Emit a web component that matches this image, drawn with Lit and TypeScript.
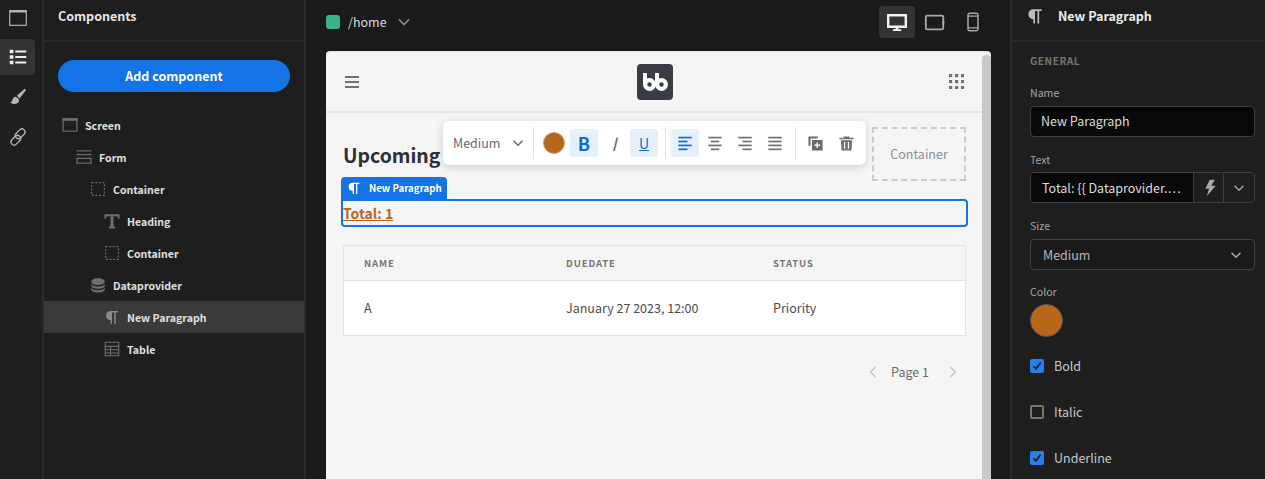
import { LitElement, html, css, svg } from "lit";
import { customElement } from "lit/decorators.js";

const P = "M12 6v15h-2v-5a6 6 0 1 1 0-12h10v2h-3v15h-2V6h-3z";
const DB = "M21 9.5v3c0 2.485-4.03 4.5-9 4.5s-9-2.015-9-4.5v-3c0 2.485 4.03 4.5 9 4.5s9-2.015 9-4.5zm-18 5c0 2.485 4.03 4.5 9 4.5s9-2.015 9-4.5v3c0 2.485-4.03 4.5-9 4.5s-9-2.015-9-4.5v-3zm9-2.5c-4.97 0-9-2.015-9-4.5S7.03 3 12 3s9 2.015 9 4.5-4.03 4.5-9 4.5z";

const icon = (size: number, body: unknown, box = "0 0 24 24") =>
  html`<svg width=${size} height=${size} viewBox=${box} fill="currentColor">${body}</svg>`;

const screenIcon = svg`<rect x="2.8" y="4" width="18.4" height="16.2" fill="none" stroke="currentColor" stroke-width="1.6"/><rect x="2" y="3" width="20" height="3.4"/>`;
const formIcon = svg`<rect x="2" y="3" width="20" height="1.6"/><rect x="2" y="8" width="20" height="1.6"/><rect x="2.8" y="13.8" width="18.4" height="6.4" fill="none" stroke="currentColor" stroke-width="1.6"/>`;
const containerIcon = svg`<rect x="3.5" y="3.5" width="17" height="17" fill="none" stroke="currentColor" stroke-width="1.6" stroke-dasharray="2.6 2.2"/>`;
const headingIcon = svg`<path d="M2 3h20v6h-1.6c-.4-2-1.2-3.2-3.2-3.2h-3.2V18c0 1.4.6 1.8 2.4 1.9V22H7.6v-2.1c1.8-.1 2.4-.5 2.4-1.9V5.8H6.8C4.8 5.8 4 7 3.6 9H2z"/>`;
const tableIcon = svg`<rect x="3" y="3" width="18" height="18" fill="none" stroke="currentColor" stroke-width="1.5"/><path d="M3 8.5h18M3 13h18M3 17.3h18M10 8.5V21" stroke="currentColor" stroke-width="1.4" fill="none"/>`;
const chevron = svg`<path d="M6 9l6 6 6-6" fill="none" stroke="currentColor" stroke-width="2"/>`;

const align = (kind: string) => {
  const rows: Record<string, [number, number][]> = {
    left: [[4, 20], [4, 15], [4, 20], [4, 15]],
    center: [[4, 20], [7, 17], [4, 20], [7, 17]],
    right: [[4, 20], [9, 20], [4, 20], [9, 20]],
    justify: [[4, 20], [4, 20], [4, 20], [4, 20]],
  };
  return svg`${rows[kind].map(([a, b], i) => svg`<rect x=${a} y=${4.5 + i * 4.7} width=${b - a} height="2"/>`)}`;
};

interface Row { n: string; d: number; i: unknown; on?: boolean }
const rows: Row[] = [
  { n: "Screen", d: 0, i: screenIcon },
  { n: "Form", d: 1, i: formIcon },
  { n: "Container", d: 2, i: containerIcon },
  { n: "Heading", d: 3, i: headingIcon },
  { n: "Container", d: 3, i: containerIcon },
  { n: "Dataprovider", d: 2, i: svg`<path d=${DB}/>` },
  { n: "New Paragraph", d: 3, i: svg`<path d=${P}/>`, on: true },
  { n: "Table", d: 3, i: tableIcon },
];

@customElement("app-root")
export class AppRoot extends LitElement {
  static styles = css`
    :host { display: block; width: 1265px; height: 479px; overflow: hidden; }
    * { box-sizing: border-box; }
    .app {
      display: grid; grid-template-columns: 44px 262px 1fr 255px; height: 479px; background: #1a1a1a; color: #e0e0e0;
      font-family: "Noto Sans CJK JP", "Noto Sans", sans-serif; font-size: 12.5px; line-height: 18px;
    }
    svg { display: block; flex: none; }
    .rail { background: #1e1e1e; border-right: 2px solid #2a2a2a; display: flex; flex-direction: column; gap: 4px; color: #b4b4b4; }
    .rail-btn { width: 35px; height: 36px; border-radius: 0 4px 4px 0; display: flex; align-items: center; justify-content: center; }
    .rail-btn.first { height: 35px; }
    .rail-btn.on { background: #333; color: #eee; }
    .left { background: #1e1e1e; border-right: 2px solid #2a2a2a; }
    .phead { height: 42px; border-bottom: 2px solid #2a2a2a; display: flex; align-items: center; font-weight: 600; color: #e6e6e6; padding: 0 0 8px 14px; }
    .add { margin: 18px 14px 17px 14px; height: 32px; border-radius: 16px; background: #1473e6; color: #fff; font-weight: 700; display: flex; align-items: center; justify-content: center; }
    .tree { display: flex; flex-direction: column; }
    .row { height: 32px; display: flex; align-items: center; gap: 6px; font-size: 10.6px; font-weight: 600; color: #e0e0e0; }
    .row span { padding-top: 1px; }
    .row svg { color: #6e6e6e; }
    .row.on { background: #3a3a3a; }
    .row.on svg { color: #8a8a8a; }

    .center { padding: 0 19px 0 20px; display: flex; flex-direction: column; min-width: 0; }
    .top { height: 51px; flex: none; display: flex; align-items: center; padding-bottom: 7px; color: #d8d8d8; }
    .dot { width: 14px; height: 14px; border-radius: 3px; background: #3cb08a; margin-right: 8px; }
    .route { margin-right: 7px; }
    .chev { color: #8f8f8f; }
    .devices { margin-left: auto; display: flex; align-items: center; gap: 2px; }
    .dev { width: 36px; height: 32px; border-radius: 4px; display: flex; align-items: center; justify-content: center; color: #a8a8a8; }
    .dev.on { background: #333; color: #f2f2f2; }

    .frame { flex: 1; background: #f5f5f5; border-radius: 4px 4px 0 0; border-top: 1px solid #e4e4e4; position: relative; display: grid; grid-template-columns: 1fr 9px; min-height: 0; overflow: hidden; color: #393c44; }
    .bar { background: #c9c9c9; border-radius: 4px 4px 0 0; margin-top: 3px; }
    .page { min-width: 0; position: relative; }
    .nav { height: 61px; border-bottom: 2px solid #e6e6e6; display: flex; align-items: center; justify-content: space-between; padding: 0 18px 0 19px; color: #707070; position: relative; }
    .logo { width: 36px; height: 36px; border-radius: 4px; background: #393c44; position: absolute; left: 311px; top: 12px; display: flex; align-items: center; justify-content: center; color: #fff; }
    .body { padding: 14px 16px 0 17px; }
    .head { display: flex; justify-content: space-between; height: 54px; align-items: center; }
    h1 { margin: 0; font-size: 19.4px; line-height: 30px; font-weight: 600; color: #2c2f36; position: relative; top: 1px; }
    .dash { width: 94px; height: 54px; border: 2px dashed #cbcbcb; display: flex; align-items: center; justify-content: center; color: #8e8e8e; }
    .para { margin-top: 18px; height: 28px; display: flex; align-items: center; font-size: 14px; font-weight: 700; text-decoration: underline; color: #b9651a; }
    .table { margin-top: 18px; border: 1px solid #e3e3e3; }
    .tr { display: grid; grid-template-columns: 202px 207px 1fr; padding-left: 20px; align-items: center; }
    .th { height: 35px; border-bottom: 1px solid #e3e3e3; font-size: 9.5px; font-weight: 700; letter-spacing: .9px; color: #757575; }
    .td { height: 54px; background: #fff; color: #4b4b4b; }
    .pager { display: flex; justify-content: flex-end; align-items: center; height: 18px; margin-top: 27px; color: #6e6e6e; padding-right: 3px; }
    .pager svg { color: #c0c0c0; }
    .pager span { margin: 0 14px 0 8px; }

    .select { position: absolute; left: 15px; top: 147px; width: 627px; height: 28px; border: 2px solid #1473e6; border-radius: 0 4px 4px 4px; pointer-events: none; }
    .tag { position: absolute; left: -2px; top: -24px; height: 22px; width: 106px; border-radius: 4px 4px 0 0; background: #1473e6; color: #fff; display: flex; align-items: center; gap: 7px; padding-left: 5px; font-size: 9.7px; font-weight: 600; white-space: nowrap; }
    .toolbar { position: absolute; left: 117px; top: 69px; width: 423px; height: 44px; background: #fff; border-radius: 6px; box-shadow: 0 2px 8px rgba(0,0,0,.16); display: flex; align-items: center; padding-left: 10px; color: #707070; }
    .tsel { display: flex; align-items: center; color: #6a6a6a; width: 80px; flex: none; justify-content: space-between; padding-right: 6px; }
    .sep { width: 1px; height: 32px; background: #e2e2e2; flex: none; }
    .swatch { width: 22px; height: 22px; border-radius: 50%; background: #b9651a; border: 1px solid #c9a283; margin: 0 5px 0 9px; flex: none; }
    .tb { width: 28px; height: 28px; border-radius: 3px; display: flex; align-items: center; justify-content: center; margin-right: 2px; font-size: 18px; color: #707070; flex: none; }
    .tb.on { background: #e6f0fb; color: #0b6bd4; }
    .b { font-weight: 700; }
    .i { font-style: italic; }
    .u { text-decoration: underline; font-size: 14px; }
    .sep.a { margin: 0 5px 0 5px; }
    .sep.c { margin: 0 11px 0 4px; }
    .act { display: flex; margin-right: 14px; flex: none; }
    .act.dup { color: #6a6a6a; }
    .act.del { margin-right: 0; }

    .right { background: #1e1e1e; border-left: 2px solid #2a2a2a; }
    .right .phead { padding-left: 13px; gap: 13px; color: #eee; }
    .right .phead svg { color: #bdbdbd; }
    .form { padding: 10px 10px 0 18px; display: flex; flex-direction: column; }
    .group { font-size: 10.2px; line-height: 18px; font-weight: 600; letter-spacing: .5px; color: #757575; margin-bottom: 14px; }
    label { font-size: 10.6px; line-height: 18px; color: #a6a6a6; display: block; }
    .input { height: 31px; margin-top: 4px; margin-bottom: 14px; border: 1px solid #3e3e3e; border-radius: 4px; background: #080808; display: flex; align-items: center; padding: 0 0 1px 10px; color: #dcdcdc; }
    .combo { display: flex; height: 31px; margin-top: 3px; margin-bottom: 14px; border: 1px solid #3e3e3e; border-radius: 4px; color: #dcdcdc; }
    .combo .val { flex: 1; min-width: 0; white-space: nowrap; overflow: hidden; background: #080808; border-radius: 3px 0 0 3px; padding-left: 11px; display: flex; align-items: center; }
    .combo .cb { display: flex; align-items: center; justify-content: center; border-left: 1px solid #3e3e3e; color: #a8a8a8; flex: none; }
    .cb.flash { width: 30px; }
    .cb.more { width: 31px; }
    .dd { height: 31px; margin-top: 4px; margin-bottom: 13px; border: 1px solid #424242; border-radius: 4px; background: #1a1a1a; display: flex; align-items: center; justify-content: space-between; padding: 0 9px 0 12px; color: #b8b8b8; }
    .dd svg { color: #aaa; }
    .color { width: 33px; height: 33px; border-radius: 50%; background: #b9651a; border: 1px solid #5a5a5a; margin-top: 3px; margin-bottom: 22px; }
    .check { display: flex; align-items: center; gap: 10px; height: 14px; color: #c8c8c8; margin-bottom: 32px; }
    .box { width: 14px; height: 14px; border-radius: 2px; display: flex; align-items: center; justify-content: center; flex: none; }
    .box.y { background: #2680eb; color: #1e1e1e; }
    .box.n { border: 2px solid #757575; }
  `;

  private check(label: string, on: boolean) {
    return html`<div class="check"><span class="box ${on ? "y" : "n"}">
      ${on ? html`<svg width="10" height="10" viewBox="0 0 10 10"><path d="M1.5 5.2 4 8l4.6-6.4" fill="none" stroke="currentColor" stroke-width="1.7"/></svg>` : ""}
    </span>${label}</div>`;
  }

  render() {
    return html`<div class="app">
      <nav class="rail">
        <div class="rail-btn first">${icon(22, svg`<rect x="3" y="4" width="18" height="16" fill="none" stroke="currentColor" stroke-width="1.3"/><rect x="3" y="3.4" width="18" height="2.6"/>`)}</div>
        <div class="rail-btn on">${icon(22, svg`<path d="M3 4h4v4H3zM3 10h4v4H3zM3 16h4v4H3z"/><path d="M9 5h12v2H9zM9 11h12v2H9zM9 17h12v2H9z"/>`)}</div>
        <div class="rail-btn">${icon(20, svg`<path d="M21 2.8c-.5-.5-1.2-.4-1.7 0L10.6 10.6l3.2 3.2 7.4-9.2c.4-.5.3-1.3-.2-1.8zM9.4 11.8c-2.1 0-3.6 1.3-3.9 3.2-.2 1.6-1 2.6-3 3.2 2.2 2.2 6.6 2.9 9.2 1.1 1.7-1.2 2-3.4 1.1-5l-3.4-2.5z"/>`)}</div>
        <div class="rail-btn">${icon(22, svg`<g fill="none" stroke="currentColor" stroke-width="1.4"><rect x="11" y="2.5" width="6.8" height="12" rx="3.4" transform="rotate(45 14.4 8.5)"/><rect x="6.2" y="9.5" width="6.8" height="12" rx="3.4" transform="rotate(45 9.6 15.5)"/></g>`)}</div>
      </nav>

      <section class="left">
        <div class="phead">Components</div>
        <div class="add">Add component</div>
        <div class="tree">
          ${rows.map(r => html`<div class="row ${r.on ? "on" : ""}" style="padding-left:${17 + r.d * 14}px">${icon(18, r.i)}<span>${r.n}</span></div>`)}
        </div>
      </section>

      <main class="center">
        <div class="top">
          <span class="dot"></span><span class="route">/home</span>
          <span class="chev">${icon(20, chevron)}</span>
          <div class="devices">
            <div class="dev on">${icon(22, svg`<path d="M2.4 4.6h19.2v12.6H2.4z" fill="none" stroke="currentColor" stroke-width="2.6"/><path d="M10.5 17.5h3V20h3v1.8h-9V20h3z"/>`)}</div>
            <div class="dev">${icon(22, svg`<rect x="2" y="5" width="19" height="15" rx="1.5" fill="none" stroke="currentColor" stroke-width="2"/><circle cx="21" cy="12.5" r="1.3"/>`)}</div>
            <div class="dev">${icon(20, svg`<rect x="6" y="1.5" width="12" height="21" rx="2" fill="none" stroke="currentColor" stroke-width="1.8"/><path d="M6 5h12M6 19h12" stroke="currentColor" stroke-width="1.6"/>`)}</div>
          </div>
        </div>
        <div class="frame">
          <div class="page">
            <header class="nav">
              ${icon(14, svg`<path d="M0 0h14v2H0zM0 5h14v2H0zM0 10h14v2H0z"/>`, "0 0 14 12")}
              <div class="logo"><svg width="25" height="18" viewBox="0 0 25 18"><path d="M0 0h4v12H0zM12 0h4v12h-4z" fill="currentColor"/><circle cx="6.5" cy="11.5" r="6.5" fill="currentColor"/><circle cx="18.5" cy="11.5" r="6.5" fill="currentColor"/><circle cx="6.5" cy="11.5" r="2.2" fill="#393c44"/><circle cx="18.5" cy="11.5" r="2.2" fill="#393c44"/></svg></div>
              ${icon(15, svg`${[0, 6, 12].flatMap(x => [0, 6, 12].map(y => svg`<rect x=${x} y=${y} width="3.2" height="3.2"/>`))}`, "0 0 15 15")}
            </header>
            <div class="body">
              <div class="head"><h1>Upcoming</h1><div class="dash">Container</div></div>
              <div class="para">Total: 1</div>
              <div class="table">
                <div class="tr th"><span>NAME</span><span>DUEDATE</span><span>STATUS</span></div>
                <div class="tr td"><span>A</span><span>January 27 2023, 12:00</span><span>Priority</span></div>
              </div>
              <div class="pager">
                ${icon(20, svg`<path d="M15 6l-6 6 6 6" fill="none" stroke="currentColor" stroke-width="1.4"/>`)}
                <span>Page 1</span>
                ${icon(20, svg`<path d="M9 6l6 6-6 6" fill="none" stroke="currentColor" stroke-width="1.4"/>`)}
              </div>
            </div>
            <div class="select">
              <div class="tag">${icon(16, svg`<path d=${P}/>`)}<span>New Paragraph</span></div>
            </div>
            <div class="toolbar">
              <div class="tsel"><span>Medium</span>${icon(18, chevron)}</div>
              <span class="sep"></span>
              <span class="swatch"></span>
              <span class="tb on b">B</span><span class="tb i">I</span><span class="tb on u">U</span>
              <span class="sep a"></span>
              <span class="tb on">${icon(20, align("left"))}</span>
              <span class="tb">${icon(20, align("center"))}</span>
              <span class="tb">${icon(20, align("right"))}</span>
              <span class="tb">${icon(20, align("justify"))}</span>
              <span class="sep c"></span>
              <span class="act dup">${icon(17, svg`<path d="M2 2h13v3H5v10H2z"/><path fill-rule="evenodd" d="M7 7h15v15H7zM13.5 10.5v3h-3v2h3v3h2v-3h3v-2h-3v-3z"/>`)}</span>
              <span class="act del">${icon(17, svg`<path d="M8 2h8v2h6v2H2V4h6zM4 7.5h16L19 22H5zM8.5 10v9.5h1.6V10zM13.9 10v9.5h1.6V10z"/>`)}</span>
            </div>
          </div>
          <div class="bar"></div>
        </div>
      </main>

      <aside class="right">
        <div class="phead">${icon(20, svg`<path d=${P}/>`)}<span>New Paragraph</span></div>
        <div class="form">
          <div class="group">GENERAL</div>
          <label>Name</label>
          <div class="input">New Paragraph</div>
          <label>Text</label>
          <div class="combo">
            <div class="val">Total: {{ Dataprovider.…</div>
            <div class="cb flash">${icon(18, svg`<path d="M13 1h7l-5 8h6L9 23l3-10H7z"/>`)}</div>
            <div class="cb more">${icon(18, chevron)}</div>
          </div>
          <label>Size</label>
          <div class="dd"><span>Medium</span>${icon(18, chevron)}</div>
          <label>Color</label>
          <div class="color"></div>
          ${this.check("Bold", true)}
          ${this.check("Italic", false)}
          ${this.check("Underline", true)}
        </div>
      </aside>
    </div>`;
  }
}
